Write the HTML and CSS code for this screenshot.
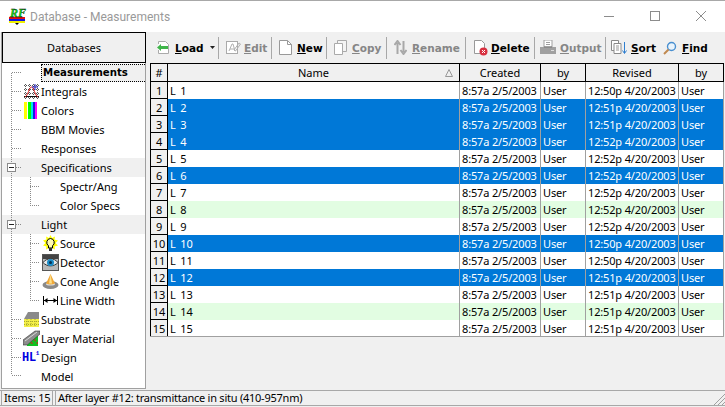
FILE: index.html
```html
<!DOCTYPE html>
<html lang="en">
<head>
  <meta charset="UTF-8">
  <title>Database - Measurements</title>
  <link rel="stylesheet" href="styles.css">
</head>
<body>
<div class="window">

  <!-- Title bar -->
  <div class="titlebar">
    <svg class="logo" width="17" height="17" viewBox="0 0 17 17">
      <rect x="0" y="9" width="16" height="2" fill="#e01010"/>
      <rect x="0" y="11" width="16" height="2" fill="#1010e0"/>
      <rect x="0" y="13" width="16" height="2" fill="#f0f000"/>
      <path d="M6 15h4l-2 2z" fill="#000"/>
      <text x="1" y="9" class="logo-text">RF</text>
    </svg>
    <span class="title">Database - Measurements</span>
    <div class="controls">
      <svg width="10" height="10" viewBox="0 0 10 10"><path d="M0 5.500h10" stroke="#8c8c8c"/></svg>
      <svg width="10" height="10" viewBox="0 0 10 10"><rect x=".5" y=".5" width="9" height="9" fill="none" stroke="#8c8c8c"/></svg>
      <svg width="10" height="10" viewBox="0 0 10 10"><path d="M0 0l10 10M10 0L0 10" stroke="#8c8c8c"/></svg>
    </div>
  </div>

  <div class="main">
    <!-- Left side: databases tree -->
    <div class="side">
      <div class="side-head">Databases</div>
      <div class="tree">
        <svg class="tree-lines" width="143" height="323" viewBox="0 0 143 323">
          <g stroke="#8a8a8a" stroke-dasharray="1 1" fill="none">
            <path d="M9.500 10V312"/>
            <path d="M10 9.500h9M10 28.500h9M10 47.500h9M10 66.500h9M10 85.500h9M14 104.500h5M14 161.500h5M10 256.500h9M10 275.500h9M10 294.500h9M10 312.500h9"/>
            <path d="M28.500 114V143M28 123.500h9M28 142.500h9"/>
            <path d="M28.500 171V238M28 180.500h9M28 199.500h9M28 218.500h9M28 237.500h9"/>
          </g>
          <g fill="#fff" stroke="#8a8a8a">
            <rect x="5.500" y="100.500" width="8" height="8"/>
            <rect x="5.500" y="157.500" width="8" height="8"/>
          </g>
          <path d="M7 104.500h5M7 161.500h5" stroke="#222"/>
        </svg>

        <div class="row"><span class="icon"></span><span class="label label-active">Measurements</span></div>
        <div class="row">
          <span class="icon"><svg width="17" height="17" viewBox="0 0 17 17">
            <path d="M1 2.500h15M1 6.500h15M1 10.500h15M1 14.500h15M2.500 1v15M6.500 1v15M10.500 1v15M14.500 1v15" stroke="#555" stroke-dasharray="1 1"/>
            <path d="M1 13.500h15" stroke="#111"/>
            <path d="M2 14C5 13 6 4 8.500 4S12 13 15 14" stroke="#e01818" fill="none"/>
            <path d="M9 4h6M12 1v6" stroke="#2020c0"/>
          </svg></span>
          <span class="label">Integrals</span>
        </div>
        <div class="row">
          <span class="icon"><svg width="17" height="17" viewBox="0 0 17 17">
            <rect x="1" y="0" width="3" height="17" fill="#ffff00"/>
            <rect x="4" y="0" width="1" height="17" fill="#fff"/>
            <rect x="5" y="0" width="3" height="17" fill="#00ff00"/>
            <rect x="8" y="0" width="2" height="17" fill="#00e8e8"/>
            <rect x="10" y="0" width="2" height="17" fill="#1818e8"/>
            <rect x="12" y="0" width="2" height="17" fill="#ff00ff"/>
          </svg></span>
          <span class="label">Colors</span>
        </div>
        <div class="row"><span class="icon"></span><span class="label">BBM Movies</span></div>
        <div class="row"><span class="icon"></span><span class="label">Responses</span></div>
        <div class="row row-group"><span class="icon"></span><span class="label">Specifications</span></div>
        <div class="row row-sub"><span class="icon"></span><span class="label">Spectr/Ang</span></div>
        <div class="row row-sub"><span class="icon"></span><span class="label">Color Specs</span></div>
        <div class="row row-group"><span class="icon"></span><span class="label">Light</span></div>
        <div class="row row-sub">
          <span class="icon"><svg width="17" height="17" viewBox="0 0 17 17">
            <path d="M8.500 0L10 3l3-1.500-.5 3 3.500 1-2.500 2.500 2.500 2.500-3.500 1 .5 3-3-1.500H7l-3 1.500.5-3L1 10.500 3.500 8 1 5.500l3.500-1-.5-3L7 3z" fill="#ffff00"/>
            <path d="M8.500 3.500a4 4 0 0 1 2 7.300V13h-4v-2.200a4 4 0 0 1 2-7.300z" fill="#fffbb0" stroke="#000"/>
            <rect x="7" y="13" width="3" height="3" fill="#333"/>
          </svg></span>
          <span class="label">Source</span>
        </div>
        <div class="row row-sub">
          <span class="icon"><svg width="17" height="17" viewBox="0 0 17 17">
            <rect x=".5" y=".5" width="16" height="16" fill="#b8b8b8" stroke="#555"/>
            <rect x="1" y="1" width="15" height="4" fill="#444"/>
            <path d="M1 8.500C5 3.500 12 3.500 16 8.500 12 13 5 13 1 8.500z" fill="#e8e8e8" stroke="#333"/>
            <circle cx="8.500" cy="8.500" r="3.500" fill="#1a8cc8"/>
            <circle cx="8.500" cy="8.500" r="1.500" fill="#053050"/>
          </svg></span>
          <span class="label">Detector</span>
        </div>
        <div class="row row-sub">
          <span class="icon"><svg width="17" height="17" viewBox="0 0 17 17">
            <ellipse cx="8.500" cy="12" rx="8" ry="4" fill="#8a8a8a"/>
            <ellipse cx="8.500" cy="11" rx="4.500" ry="1.500" fill="#dcdcdc"/>
            <path d="M8.500 1L13 10.500Q8.500 12.500 4 10.500z" fill="#f0a838"/>
            <path d="M8.500 1L10 10.500 7 10.500z" fill="#fbe08a"/>
          </svg></span>
          <span class="label">Cone Angle</span>
        </div>
        <div class="row row-sub">
          <span class="icon"><svg width="17" height="17" viewBox="0 0 17 17">
            <path d="M1.500 4v9M15.500 4v9M2 8.500h13" stroke="#000" fill="none"/>
            <path d="M2 8.500l3.500-2.500v5zM15 8.500l-3.500-2.500v5z" fill="#000"/>
          </svg></span>
          <span class="label">Line Width</span>
        </div>
        <div class="row">
          <span class="icon"><svg width="17" height="17" viewBox="0 0 17 17">
            <path d="M1 8L5 1h11v7z" fill="#8a8a8a"/>
            <rect x="1" y="8" width="15" height="8" fill="#f4f048"/>
            <path d="M1 10.500h15M1 13.500h15M4 8v8M8 8v8M12 8v8" stroke="#a8a830" stroke-dasharray="1 1"/>
          </svg></span>
          <span class="label">Substrate</span>
        </div>
        <div class="row">
          <span class="icon"><svg width="17" height="17" viewBox="0 0 17 17">
            <path d="M4 15L15 5v11H4z" fill="#10c020"/>
            <path d="M7 13l2-1 1 2zM11 9l2 1-1 2zM13 13l2-1v2z" fill="#d02020"/>
            <path d="M0 10L12 1h5v3L4 15H0z" fill="#8c8c8c" stroke="#333" stroke-width=".6"/>
            <path d="M2 11l12-9" stroke="#d8d8d8"/>
          </svg></span>
          <span class="label">Layer Material</span>
        </div>
        <div class="row">
          <span class="icon icon-design">HL<sup class="icon-sup">1</sup></span>
          <span class="label">Design</span>
        </div>
        <div class="row"><span class="icon"></span><span class="label">Model</span></div>
      </div>
    </div>

    <div class="content">
      <!-- Toolbar -->
      <div class="toolbar">
        <div class="tool tool-load">
          <svg width="15" height="15" viewBox="0 0 15 15"><path d="M2.500 4V1.500h7l3 3v9h-10V10" fill="#fff" stroke="#aaa"/><path d="M1 7.500l4-3.500v2h7v3H5v2z" fill="#3fb54a"/></svg>
          <b><u>L</u>oad</b>
          <svg class="caret" width="5" height="3" viewBox="0 0 5 3"><path d="M0 0h5L2.500 3z" fill="#222"/></svg>
        </div>
        <i class="sep"></i>
        <div class="tool tool-edit off">
          <svg width="15" height="15" viewBox="0 0 15 15"><rect x=".5" y="1.500" width="11" height="12" fill="#fff" stroke="#aaa"/><path d="M3 11L6 4h1l2 7M4 9h4M8 10l5-7 1.500 1-5 7z" fill="none" stroke="#b0b0b0"/></svg>
          <b><u>E</u>dit</b>
        </div>
        <i class="sep"></i>
        <div class="tool tool-new">
          <svg width="13" height="15" viewBox="0 0 13 15"><path d="M.5.500h8l4 4v10H.5z" fill="#fff" stroke="#999"/><path d="M8.500.500v4h4" fill="none" stroke="#999"/></svg>
          <b><u>N</u>ew</b>
        </div>
        <i class="sep"></i>
        <div class="tool tool-copy off">
          <svg width="13" height="15" viewBox="0 0 13 15"><path d="M3.500.500h9v11h-9z" fill="#f4f4f4" stroke="#aaa"/><path d="M.5 3.500h8v11h-8z" fill="#fff" stroke="#aaa"/></svg>
          <b><u>C</u>opy</b>
        </div>
        <i class="sep"></i>
        <div class="tool tool-rename off">
          <svg width="13" height="15" viewBox="0 0 13 15"><path d="M3.500 14V3M.5 5l3-4 3 4M9.500 1v11M6.500 10l3 4 3-4" fill="none" stroke="#a8a8a8" stroke-width="2"/></svg>
          <b><u>R</u>ename</b>
        </div>
        <i class="sep"></i>
        <div class="tool tool-delete">
          <svg width="15" height="16" viewBox="0 0 15 16"><path d="M1.500.500h7l3 3v10h-10z" fill="#fff" stroke="#999"/><circle cx="10.500" cy="11.500" r="4" fill="#d83040"/><path d="M9 10l3 3M12 10l-3 3" stroke="#fff"/></svg>
          <b><u>D</u>elete</b>
        </div>
        <i class="sep sep-tight"></i>
        <div class="tool tool-output off">
          <svg width="16" height="15" viewBox="0 0 16 15"><rect x="4" y="0" width="8" height="7" fill="#fff" stroke="#a0a0a0"/><path d="M6 2.500h4M6 4.500h4" stroke="#a0a0a0"/><path d="M0 7h16v7H0z" fill="#a0a0a0"/><path d="M4 7h8" stroke="#777"/><path d="M11 10.500h3" stroke="#ddd"/></svg>
          <b><u>O</u>utput</b>
        </div>
        <i class="sep sep-tight"></i>
        <div class="tool tool-sort">
          <svg width="16" height="15" viewBox="0 0 16 15"><path d="M.5.500h7v10h-7z" fill="#fff" stroke="#8a8a8a"/><path d="M3 3.500h7v10H3z" fill="#fff" stroke="#8a8a8a"/><path d="M5 6h3M5 8h3M5 10h3" stroke="#999"/><path d="M13.500 2v11M11.500 10.500l2 3 2-3" fill="none" stroke="#2f7fd0"/></svg>
          <b><u>S</u>ort</b>
        </div>
        <div class="tool tool-find">
          <svg width="14" height="14" viewBox="0 0 14 14"><circle cx="8.500" cy="5.500" r="4" fill="#eaf4fc" stroke="#4a90d0" stroke-width="1.400"/><path d="M5.500 8.500L1 13" stroke="#c08a50" stroke-width="2"/></svg>
          <b><u>F</u>ind</b>
        </div>
      </div>

      <!-- Measurements grid -->
      <table class="grid">
        <colgroup>
          <col class="c-num"><col class="c-name"><col class="c-created"><col class="c-by"><col class="c-revised"><col class="c-by">
        </colgroup>
        <thead>
          <tr>
            <th>#</th>
            <th class="th-name">Name
              <svg class="sort-mark" width="8" height="8" viewBox="0 0 8 8"><path d="M4 .5L7.500 7.500H.5z" fill="none" stroke="#999"/></svg>
            </th>
            <th>Created</th><th>by</th><th>Revised</th><th>by</th>
          </tr>
        </thead>
        <tbody id="rows">
          <tr><td class="num">1</td><td>L 1</td><td>8:57a 2/5/2003</td><td>User</td><td>12:50p 4/20/2003</td><td>User</td></tr>
          <tr class="sel"><td class="num">2</td><td>L 2</td><td>8:57a 2/5/2003</td><td>User</td><td>12:51p 4/20/2003</td><td>User</td></tr>
          <tr class="sel"><td class="num">3</td><td>L 3</td><td>8:57a 2/5/2003</td><td>User</td><td>12:51p 4/20/2003</td><td>User</td></tr>
          <tr class="sel"><td class="num">4</td><td>L 4</td><td>8:57a 2/5/2003</td><td>User</td><td>12:52p 4/20/2003</td><td>User</td></tr>
          <tr><td class="num">5</td><td>L 5</td><td>8:57a 2/5/2003</td><td>User</td><td>12:52p 4/20/2003</td><td>User</td></tr>
          <tr class="sel"><td class="num">6</td><td>L 6</td><td>8:57a 2/5/2003</td><td>User</td><td>12:52p 4/20/2003</td><td>User</td></tr>
          <tr><td class="num">7</td><td>L 7</td><td>8:57a 2/5/2003</td><td>User</td><td>12:52p 4/20/2003</td><td>User</td></tr>
          <tr class="mark"><td class="num">8</td><td>L 8</td><td>8:57a 2/5/2003</td><td>User</td><td>12:52p 4/20/2003</td><td>User</td></tr>
          <tr><td class="num">9</td><td>L 9</td><td>8:57a 2/5/2003</td><td>User</td><td>12:52p 4/20/2003</td><td>User</td></tr>
          <tr class="sel"><td class="num">10</td><td>L 10</td><td>8:57a 2/5/2003</td><td>User</td><td>12:50p 4/20/2003</td><td>User</td></tr>
          <tr><td class="num">11</td><td>L 11</td><td>8:57a 2/5/2003</td><td>User</td><td>12:50p 4/20/2003</td><td>User</td></tr>
          <tr class="sel"><td class="num">12</td><td>L 12</td><td>8:57a 2/5/2003</td><td>User</td><td>12:51p 4/20/2003</td><td>User</td></tr>
          <tr><td class="num">13</td><td>L 13</td><td>8:57a 2/5/2003</td><td>User</td><td>12:51p 4/20/2003</td><td>User</td></tr>
          <tr class="mark"><td class="num">14</td><td>L 14</td><td>8:57a 2/5/2003</td><td>User</td><td>12:51p 4/20/2003</td><td>User</td></tr>
          <tr><td class="num">15</td><td>L 15</td><td>8:57a 2/5/2003</td><td>User</td><td>12:51p 4/20/2003</td><td>User</td></tr>
        </tbody>
      </table>
    </div>
  </div>

  <!-- Status bar -->
  <div class="status">
    <div class="status-items">Items: 15</div>
    <div class="status-msg">After layer #12: transmittance in situ (410-957nm)</div>
    <svg class="grip" width="11" height="11" viewBox="0 0 11 11"><path d="M0 11L11 0M4 11l7-7M8 11l3-3" stroke="#a0a0a0"/></svg>
  </div>
</div>
</body>
</html>
```

FILE: styles.css
```css
/* Base */
html, body {
  margin: 0;
  padding: 0;
}
body {
  font-family: "Noto Sans", Tahoma, sans-serif;
  font-size: 11px;
  color: #000000;
  background-color: #f0f0f0;
}
.window {
  position: relative;
  width: 725px;
  height: 407px;
  display: flex;
  flex-direction: column;
  overflow: hidden;
  box-sizing: border-box;
  border-top: 1px solid #a8a8a8;
}

/* Title bar */
.titlebar {
  height: 31px;
  flex: none;
  display: flex;
  align-items: center;
  padding-left: 9px;
  background-color: #ffffff;
}
.logo {
  margin-right: 4px;
  overflow: visible;
}
.logo-text {
  font-family: "Liberation Serif", serif;
  font-weight: bold;
  font-style: italic;
  font-size: 12px;
  fill: #10e010;
  stroke: #000000;
  stroke-width: 0.3px;
}
.title {
  font-family: Roboto, sans-serif;
  font-size: 12px;
  color: #999999;
}
.controls {
  margin-left: auto;
  margin-bottom: 1px;
  display: flex;
  gap: 36px;
  padding-right: 19px;
}

/* Main area */
.main {
  flex: 1;
  display: flex;
  min-height: 0;
}

/* Left side */
.side {
  width: 145px;
  height: 357px;
  margin-left: 1px;
  flex: none;
  box-sizing: border-box;
  background-color: #ffffff;
  border-right: 1px solid #a0a0a0;
  border-bottom: 1px solid #a0a0a0;
  border-left: 1px solid #a0a0a0;
}
.side-head {
  height: 31px;
  box-sizing: border-box;
  margin-right: -1px;
  border: 1px solid #000000;
  background-color: #f0f0f0;
  display: flex;
  align-items: center;
  justify-content: center;
}
.tree {
  position: relative;
}
.tree-lines {
  position: absolute;
  left: 0;
  top: 0;
}
.row {
  height: 19px;
  display: flex;
  align-items: center;
  padding-left: 21px;
}
.row-sub {
  padding-left: 40px;
}
.row-group {
  background-color: #f0f0f0;
}
.icon {
  width: 17px;
  height: 17px;
  flex: none;
  margin-right: 1px;
}
.icon svg {
  display: block;
}
.icon-design {
  margin-left: -1px;
  margin-right: 2px;
  font-family: "Liberation Mono", monospace;
  font-weight: bold;
  font-size: 12px;
  line-height: 19px;
  letter-spacing: -0.3px;
  color: #0000e0;
  white-space: nowrap;
}
.icon-sup {
  font-size: 6px;
  vertical-align: 6px;
  line-height: 0;
}
.label {
  white-space: nowrap;
}
.label-active {
  flex: 1;
  height: 18px;
  line-height: 16px;
  box-sizing: border-box;
  padding-left: 1px;
  font-family: "DejaVu Sans", sans-serif;
  font-size: 10.2px;
  font-weight: bold;
  background-color: #f0f0f0;
  border: 1px dotted #000000;
  border-right: none;
}

/* Right side */
.content {
  flex: 1;
  min-width: 0;
  padding-left: 4px;
}
.toolbar {
  height: 31px;
  display: flex;
  align-items: center;
  padding-left: 6px;
}
.tool {
  flex: none;
  display: flex;
  align-items: center;
  white-space: nowrap;
}
.tool svg {
  display: block;
  flex: none;
}
.tool b {
  font-family: "DejaVu Sans", sans-serif;
  font-size: 10.5px;
}
.off b {
  color: #868686;
}
.tool-load { width: 56px; gap: 4px; }
.tool-edit { width: 39px; gap: 3px; }
.tool-new { width: 41px; gap: 5px; }
.tool-copy { width: 46px; gap: 5px; }
.tool-rename { width: 65px; gap: 5px; }
.tool-delete { width: 55px; gap: 3px; }
.tool-output { width: 59px; gap: 4px; }
.tool-sort { width: 44px; gap: 4px; }
.tool-find { width: 45px; gap: 5px; margin-left: 8px; }
.caret {
  margin-left: 2px;
}
.sep {
  flex: none;
  width: 1px;
  height: 22px;
  margin: 0 7px 0 6px;
  background-color: #a8a8a8;
}
.sep-tight {
  margin-right: 5px;
}

/* Grid */
.grid {
  width: 574px;
  border-collapse: collapse;
  table-layout: fixed;
  background-color: #ffffff;
}
.c-num { width: 17px; }
.c-name { width: 292px; }
.c-created { width: 81px; }
.c-by { width: 45px; }
.c-revised { width: 93px; }
.grid th {
  height: 17px;
  padding: 0;
  font-weight: normal;
  background-color: #f0f0f0;
  border: 1px solid #000000;
}
.th-name {
  position: relative;
}
.sort-mark {
  position: absolute;
  right: 6px;
  top: 5px;
}
.grid td {
  height: 16px;
  padding: 0 0 0 2px;
  white-space: nowrap;
  letter-spacing: -0.15px;
  border-right: 1px solid #a0a0a0;
  border-bottom: 1px solid transparent;
}
.grid td:nth-child(2) {
  word-spacing: 2px;
}
.grid tbody tr:last-child td {
  border-bottom: 1px solid #a0a0a0;
}
.grid td.num {
  padding: 0;
  text-align: center;
  background-color: #f0f0f0;
  color: #000000;
  border: 1px solid #000000;
}
.sel td {
  background-color: #0078d7;
  color: #ffffff;
}
.mark td {
  background-color: #e2fde2;
}

/* Status bar */
.status {
  position: relative;
  height: 16px;
  flex: none;
  margin-bottom: 1px;
  box-sizing: border-box;
  display: flex;
  gap: 2px;
  line-height: 13px;
  border-bottom: 1px solid #a8a8a8;
  border-top: 1px solid #a8a8a8;
}
.status-items {
  width: 52px;
  margin-left: 1px;
  box-sizing: border-box;
  padding-left: 2px;
  letter-spacing: -0.15px;
  border-right: 1px solid #a8a8a8;
  border-left: 1px solid #a8a8a8;
}
.status-msg {
  flex: 1;
  padding-left: 2px;
  letter-spacing: -0.24px;
  border-left: 1px solid #a8a8a8;
}
.grip {
  position: absolute;
  right: 0;
  bottom: 0;
}
```
